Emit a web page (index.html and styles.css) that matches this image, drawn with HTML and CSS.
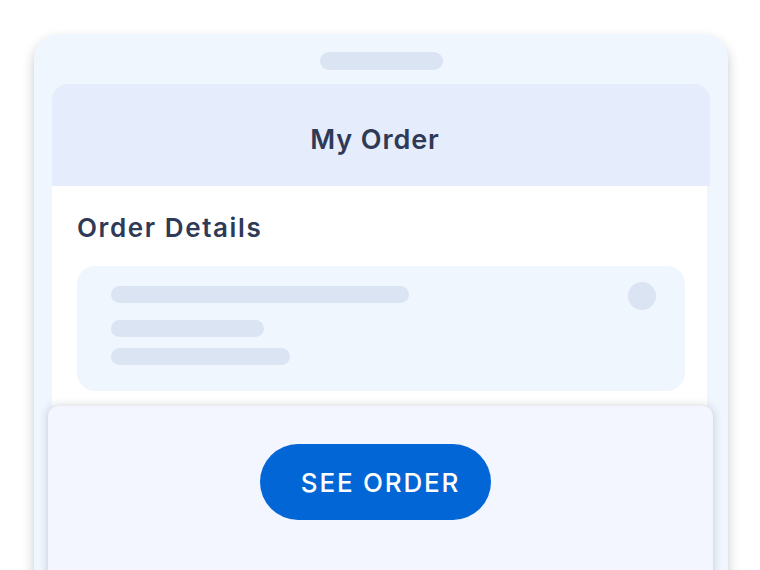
FILE: index.html
```html
<!DOCTYPE html>
<html lang="en">
<head>
    <meta charset="UTF-8">
    <meta name="viewport" content="width=device-width, initial-scale=1.0">
    <title>My Order</title>
    <link rel="stylesheet" href="styles.css">
</head>
<body>
    <div class="phone">
        <div class="handle"></div>

        <header class="top">
            <h1>My Order</h1>
        </header>

        <div class="content">
            <h2>Order Details</h2>
            <!-- placeholder card while the order loads -->
            <div class="card">
                <div class="lines">
                    <span class="line line-long"></span>
                    <span class="line line-short"></span>
                    <span class="line line-mid"></span>
                </div>
                <span class="dot"></span>
            </div>
        </div>

        <div class="sheet">
            <button class="button">SEE ORDER</button>
        </div>
    </div>
</body>
</html>
```

FILE: styles.css
```css
body {
    background-color: #ffffff;
    font-family: Inter, "Noto Sans", Arial, sans-serif;
    margin: 0;
    padding: 0;
    height: 570px;
    overflow: hidden;
}
.phone {
    position: relative;
    margin: 34px 0 0 34px;
    width: 694px;
    height: 600px;
    background-color: #f0f6fe;
    border-radius: 24px 24px 0 0;
    box-shadow: 0 6px 12px rgba(30, 40, 60, 0.25);
    padding-top: 18px;
    box-sizing: border-box;
}
.handle {
    width: 123px;
    height: 18px;
    margin: 0 auto;
    background-color: #dae4f2;
    border-radius: 9px;
}
.top {
    margin: 14px 18px 0 18px;
    height: 102px;
    background-color: #e5ecfb;
    border-radius: 16px 16px 0 0;
    display: flex;
    align-items: center;
    justify-content: center;
    padding: 9px 12px 0 0;
    box-sizing: border-box;
}
.top h1 {
    margin: 0;
    font-size: 27px;
    font-weight: 600;
    letter-spacing: 0.9px;
    color: #2e3a56;
}
.content {
    margin: 0 21px 0 18px;
    background-color: #ffffff;
    padding: 26px 22px 30px 25px;
    height: 220px;
    box-sizing: border-box;
}
.content h2 {
    margin: 0 0 22px 0;
    font-size: 26px;
    font-weight: 600;
    letter-spacing: 1.6px;
    color: #2e3a56;
    line-height: 32px;
}
.card {
    height: 125px;
    background-color: #f0f6fe;
    border-radius: 18px;
    display: flex;
    justify-content: space-between;
    padding: 20px 29px 0 34px;
    box-sizing: border-box;
}
.lines {
    display: flex;
    flex-direction: column;
    gap: 17px;
}
.lines .line + .line + .line {
    margin-top: -6px;
}
.line {
    display: block;
    height: 17px;
    border-radius: 9px;
    background-color: #dae4f2;
}
.line-long {
    width: 298px;
}
.line-short {
    width: 153px;
}
.line-mid {
    width: 179px;
}
.dot {
    width: 28px;
    height: 28px;
    margin-top: -4px;
    border-radius: 50%;
    background-color: #dae4f2;
}
.sheet {
    position: absolute;
    left: 14px;
    right: 15px;
    top: 372px;
    height: 240px;
    background-color: #f3f6fe;
    border-radius: 10px 10px 0 0;
    box-shadow: 0 0 10px rgba(30, 40, 60, 0.22);
    display: flex;
    justify-content: center;
    padding-top: 38px;
    box-sizing: border-box;
}
.button {
    width: 231px;
    height: 76px;
    margin-right: 10px;
    padding: 0 0 0 10px;
    border: none;
    border-radius: 38px;
    background-color: #0366d6;
    color: #ffffff;
    font-family: Inter, "Noto Sans", Arial, sans-serif;
    font-size: 26px;
    font-weight: 500;
    letter-spacing: 1.8px;
}
```
